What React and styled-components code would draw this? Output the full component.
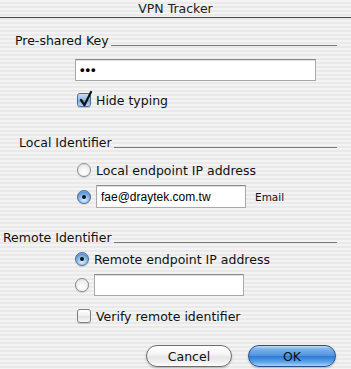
import React from "react";
import styled, { createGlobalStyle } from "styled-components";

const Global = createGlobalStyle`
  html, body { margin: 0; padding: 0; }
  body { width: 351px; height: 369px; overflow: hidden; }
`;

const stripes = `repeating-linear-gradient(to bottom, #f3f3f3 0px, #f3f3f3 2px, #e9e9e9 2px, #e9e9e9 4px)`;

const Window = styled.div`
  width: 351px;
  height: 369px;
  background: ${stripes};
  font-family: "DejaVu Sans", "Lucida Grande", sans-serif;
  font-size: 12.5px;
  color: #111;
  display: flex;
  flex-direction: column;
`;

const TitleBar = styled.div`
  height: 17px;
  border-bottom: 1px solid #4a4a4a;
  display: flex;
  align-items: center;
  justify-content: center;
  font-size: 12.5px;
  color: #222;
`;

const Body = styled.div`
  display: flex;
  flex-direction: column;
`;

const SectionHead = styled.div`
  display: flex;
  align-items: baseline;
  padding-left: ${(p) => p.$indent}px;
  padding-right: 14px;
  margin-top: ${(p) => p.$top}px;
  height: 16px;
  line-height: 16px;
`;

const Rule = styled.div`
  flex: 1;
  height: 1px;
  background: #7a7a7a;
  margin-left: 2px;
  align-self: flex-end;
  margin-bottom: 3px;
`;

const Row = styled.div`
  display: flex;
  align-items: center;
  padding-left: ${(p) => p.$indent}px;
  margin-top: ${(p) => p.$top}px;
  height: ${(p) => p.$h || 16}px;
`;

const TextField = styled.div`
  box-sizing: border-box;
  width: ${(p) => p.$w}px;
  height: ${(p) => p.$h}px;
  background: #fff;
  border: 1px solid #a8a8a8;
  border-top-color: #8a8a8a;
  box-shadow: inset 0 1px 0 #e0e0e0;
  display: flex;
  align-items: center;
  padding-left: 4px;
  font-family: "Liberation Sans", Arial, sans-serif;
  font-size: 12px;
  color: #000;
`;

const Dots = styled.span`
  font-size: 13px;
  letter-spacing: 1px;
  font-weight: bold;
  margin-top: -1px;
`;

const CheckBox = styled.span`
  box-sizing: border-box;
  width: 14px;
  height: 14px;
  border-radius: 3px;
  border: 1px solid ${(p) => (p.$on ? "#4a6f97" : "#7f7f7f")};
  background: ${(p) =>
    p.$on
      ? "linear-gradient(to bottom, #c8def5 0%, #8fb8e6 50%, #6fa3dc 51%, #b6d7f6 100%)"
      : "linear-gradient(to bottom, #ffffff 0%, #eeeeee 50%, #e2e2e2 51%, #f8f8f8 100%)"};
  box-shadow: 0 1px 1px rgba(0,0,0,0.15);
  position: relative;
  flex: none;
  margin-right: 5px;
  svg { position: absolute; left: 0px; top: -4px; }
`;

const Radio = styled.span`
  box-sizing: border-box;
  width: 14px;
  height: 14px;
  border-radius: 50%;
  border: 1px solid ${(p) => (p.$on ? "#4a6f97" : "#8a8a8a")};
  background: ${(p) =>
    p.$on
      ? "radial-gradient(circle at 50% 75%, #d9ecff 0%, #8ebbe8 45%, #5f97d6 70%, #a9cdf2 100%)"
      : "radial-gradient(circle at 50% 70%, #ffffff 0%, #f2f2f2 50%, #dcdcdc 100%)"};
  box-shadow: 0 1px 1px rgba(0,0,0,0.15);
  display: flex;
  align-items: center;
  justify-content: center;
  flex: none;
  margin-right: 5px;
  &::after {
    content: "";
    display: ${(p) => (p.$on ? "block" : "none")};
    width: 4px;
    height: 4px;
    border-radius: 50%;
    background: #111;
  }
`;

const Small = styled.span`
  font-family: "DejaVu Sans", sans-serif;
  font-size: 10.5px;
  margin-left: 9px;
`;

const Buttons = styled.div`
  display: flex;
  justify-content: flex-end;
  gap: 16px;
  padding-right: 15px;
  margin-top: 21px;
`;

const Button = styled.button`
  box-sizing: border-box;
  width: ${(p) => p.$w}px;
  height: 22px;
  border-radius: 11px;
  font-family: "DejaVu Sans", sans-serif;
  font-size: 12.5px;
  color: #111;
  padding: 0;
  border: 1px solid ${(p) => (p.$primary ? "#27508a" : "#6e6e6e")};
  background: ${(p) =>
    p.$primary
      ? "linear-gradient(to bottom, #c2dcf6 0%, #7fb2ea 15%, #4f93dd 48%, #2f7ad4 52%, #5ba4ee 80%, #a6d4fb 100%)"
      : "linear-gradient(to bottom, #ffffff 0%, #f6f6f6 40%, #e6e6e6 55%, #f2f2f2 85%, #ffffff 100%)"};
  box-shadow: 0 1px 2px rgba(0,0,0,0.25);
`;

function Check({ on }) {
  return (
    <CheckBox $on={on}>
      {on && (
        <svg width="16" height="18" viewBox="0 0 16 18">
          <path d="M3 10 L6.5 15 L13 2" fill="none" stroke="#111" strokeWidth="2.2" strokeLinecap="round" strokeLinejoin="round" />
        </svg>
      )}
    </CheckBox>
  );
}

export default function App() {
  return (
    <>
      <Global />
      <Window>
        <TitleBar>VPN Tracker</TitleBar>
        <Body>
          <SectionHead $indent={15} $top={15}>
            Pre-shared Key<Rule />
          </SectionHead>
          <Row $indent={75} $top={10} $h={22}>
            <TextField $w={241} $h={22}>
              <Dots>•••</Dots>
            </TextField>
          </Row>
          <Row $indent={77} $top={11}>
            <Check on />
            Hide typing
          </Row>
          <SectionHead $indent={19} $top={27}>
            Local Identifier<Rule />
          </SectionHead>
          <Row $indent={77} $top={11}>
            <Radio />
            Local endpoint IP address
          </Row>
          <Row $indent={77} $top={7} $h={23}>
            <Radio $on />
            <TextField $w={150} $h={23}>fae@draytek.com.tw</TextField>
            <Small>Email</Small>
          </Row>
          <SectionHead $indent={3} $top={22}>
            Remote Identifier<Rule />
          </SectionHead>
          <Row $indent={75} $top={5}>
            <Radio $on />
            Remote endpoint IP address
          </Row>
          <Row $indent={75} $top={7} $h={22}>
            <Radio />
            <TextField $w={150} $h={22} />
          </Row>
          <Row $indent={77} $top={12}>
            <Check />
            Verify remote identifier
          </Row>
          <Buttons>
            <Button $w={86}>Cancel</Button>
            <Button $w={88} $primary>OK</Button>
          </Buttons>
        </Body>
      </Window>
    </>
  );
}
